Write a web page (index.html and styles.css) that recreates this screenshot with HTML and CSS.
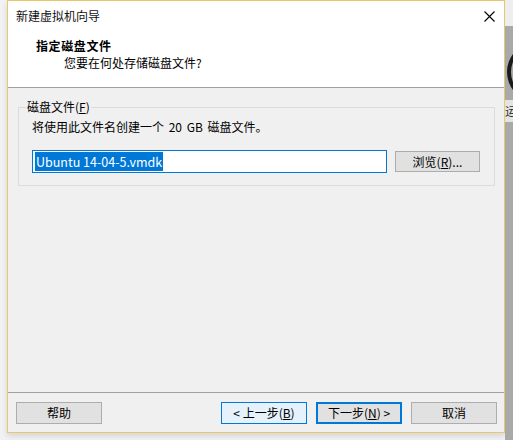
FILE: index.html
```html
<!DOCTYPE html>
<html lang="zh-CN">
<head>
<meta charset="utf-8">
<title>新建虚拟机向导</title>
<link rel="stylesheet" href="styles.css">
</head>
<body>
<div class="screen">
  <div class="gap-left"></div>
  <div class="window">
    <div class="titlebar">
      <span class="title">新建虚拟机向导</span>
      <svg class="close" width="11" height="11" viewBox="0 0 11 11"><path d="M0.5 0.5 L10.5 10.5 M10.5 0.5 L0.5 10.5" stroke="#000" stroke-width="1.1" fill="none"/></svg>
    </div>
    <div class="header">
      <div class="h-title">指定磁盘文件</div>
      <div class="h-sub">您要在何处存储磁盘文件?</div>
    </div>
    <div class="body">
      <fieldset class="group">
        <legend>磁盘文件(<u>F</u>)</legend>
        <div class="group-inner">
          <div class="desc">将使用此文件名创建一个 20 GB 磁盘文件。</div>
          <div class="row">
            <div class="input"><span class="sel">Ubuntu 14-04-5.vmdk</span></div>
            <div class="btn browse">浏览(<u>R</u>)...</div>
          </div>
        </div>
      </fieldset>
    </div>
    <div class="footer">
      <div class="btn">帮助</div>
      <div class="spacer"></div>
      <div class="btn back">&lt; 上一步(<u>B</u>)</div>
      <div class="btn next">下一步(<u>N</u>) &gt;</div>
      <div class="btn">取消</div>
    </div>
  </div>
  <div class="desk">
    <div class="desk-top"></div>
    <div class="ring"></div>
    <div class="desk-label">运</div>
  </div>
</div>
</body>
</html>
```
FILE: styles.css
```css
html, body {
  margin: 0;
  padding: 0;
}
body {
  background: #f2f2f4;
  font-family: "Noto Sans CJK SC", "Noto Sans", sans-serif;
  font-size: 12px;
  color: #000;
  width: 513px;
  height: 440px;
  overflow: hidden;
}
.screen {
  display: flex;
  height: 440px;
}
.gap-left {
  width: 7px;
  flex: none;
}
.window {
  width: 498px;
  height: 433px;
  box-sizing: border-box;
  border: 1px solid #e6c96e;
  background: #f0f0f0;
  display: flex;
  flex-direction: column;
  flex: none;
  box-shadow: 0 3px 6px rgba(0,0,0,0.12);
}
.titlebar {
  height: 30px;
  background: #fff;
  display: flex;
  align-items: center;
  padding-left: 8px;
  padding-right: 9px;
}
.title {
  flex: 1;
  line-height: 16px;
  color: #111;
}
.close {
  display: block;
}
.header {
  background: #fff;
  border-bottom: 1px solid #a0a0a0;
  padding-left: 28px;
  padding-top: 7px;
  box-sizing: border-box;
  height: 57px;
}
.h-title {
  font-weight: bold;
  line-height: 16px;
  height: 17px;
  letter-spacing: 0.6px;
}
.h-sub {
  line-height: 16px;
  padding-left: 28px;
}
.body {
  flex: 1;
  padding: 11px 9px 0 10px;
}
.group {
  margin: 0;
  padding: 0 0 12px 0;
  border: 1px solid #dcdcdc;
  min-width: 0;
}
.group legend {
  padding: 0 1px;
  margin-left: 7px;
  line-height: 16px;
}
.group u, .btn u {
  text-decoration: underline;
  text-underline-offset: 1px;
}
.group-inner {
  padding: 4px 0 0 13px;
}
.desc {
  line-height: 16px;
  word-spacing: 2px;
}
.row {
  display: flex;
  align-items: center;
  margin-top: 15px;
}
.input {
  width: 355px;
  height: 23px;
  box-sizing: border-box;
  border: 1px solid #0078d7;
  background: #fff;
  padding: 1px 2px;
  display: flex;
  align-items: center;
}
.sel {
  background: #0078d7;
  color: #fff;
  line-height: 19px;
  padding: 0 1px;
  font-size: 12.5px;
}
.btn {
  height: 22px;
  width: 86px;
  box-sizing: border-box;
  border: 1px solid #adadad;
  background: #e1e1e1;
  display: flex;
  align-items: center;
  justify-content: center;
  line-height: 16px;
  flex: none;
}
.browse {
  width: 85px;
  height: 21px;
  margin-left: 8px;
}
.footer {
  border-top: 1px solid #a0a0a0;
  height: 40px;
  box-sizing: border-box;
  display: flex;
  align-items: flex-start;
  padding: 9px 7px 0 8px;
  gap: 9px;
}
.spacer {
  flex: 1;
}
.back {
  border-color: #0078d7;
  background: #e5f1fb;
}
.next {
  border: 2px solid #0078d7;
}
.desk {
  flex: 1;
  background: #a9a9a9;
  position: relative;
  overflow: hidden;
}
.desk-top {
  height: 26px;
  background: #eeeeee;
}
.ring {
  position: absolute;
  left: 2px;
  top: 44px;
  width: 44px;
  height: 48px;
  border: 4px solid #1a1a1a;
  border-radius: 50%;
}
.desk-label {
  position: absolute;
  left: 0;
  top: 100px;
  width: 20px;
  height: 22px;
  background: #e4e4e4;
  line-height: 22px;
  font-size: 12px;
  color: #333;
}
```
